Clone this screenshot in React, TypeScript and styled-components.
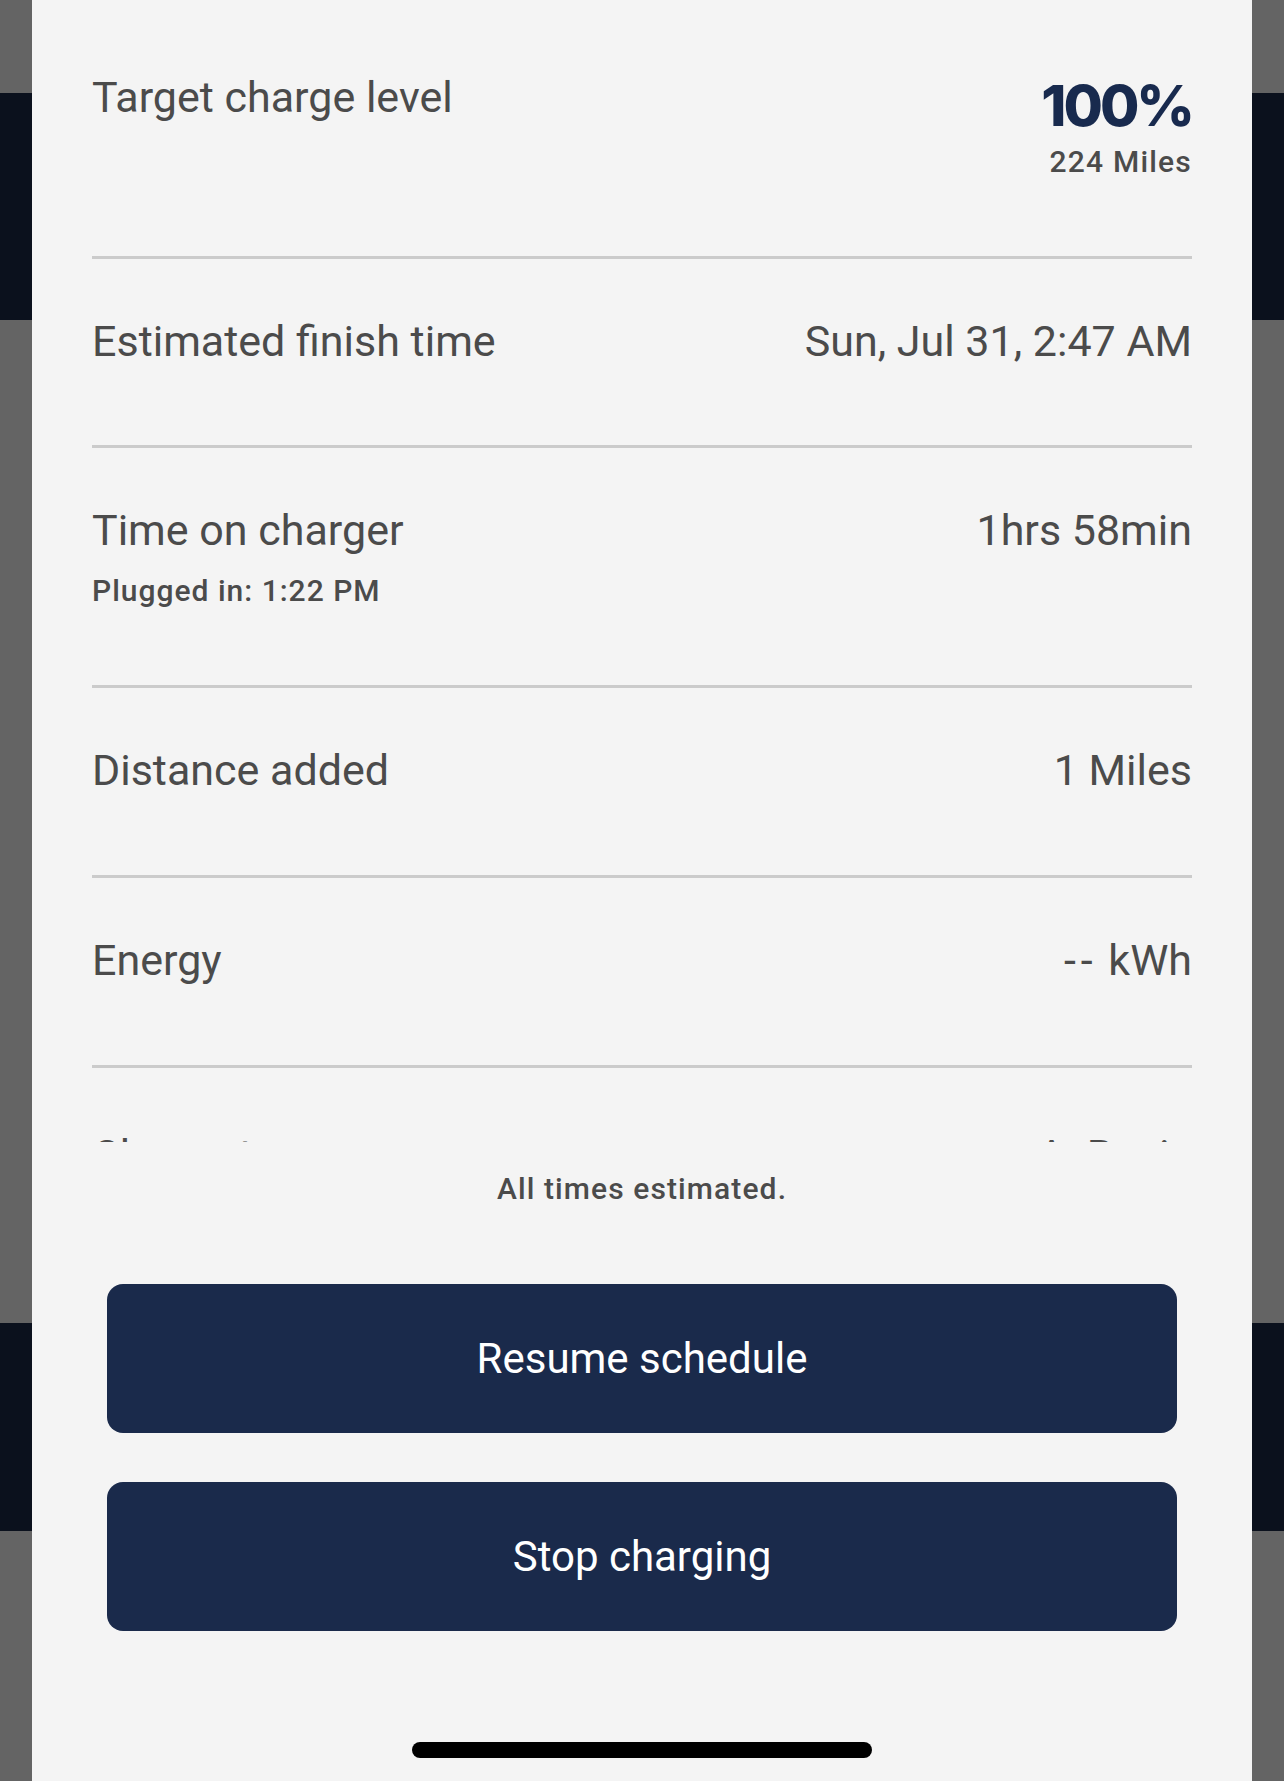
import React from "react";
import styled, { createGlobalStyle } from "styled-components";

const GlobalStyle = createGlobalStyle`
  html, body {
    margin: 0;
    padding: 0;
    background: #646464;
  }
  * { box-sizing: border-box; }
`;

const Screen = styled.div`
  position: relative;
  width: 1284px;
  height: 1781px;
  overflow: hidden;
  font-family: Roboto, "Liberation Sans", Arial, sans-serif;
`;

const Backdrop = styled.div`
  display: flex;
  flex-direction: column;
  height: 100%;
`;

const Band = styled.div<{ $h: number; $dark?: boolean }>`
  flex: 0 0 ${(p) => p.$h}px;
  background: ${(p) => (p.$dark ? "#0b111d" : "#646464")};
`;

const Sheet = styled.div`
  position: absolute;
  top: 0;
  left: 32px;
  width: 1220px;
  height: 1781px;
  background: #f4f4f4;
  display: flex;
  flex-direction: column;
`;

const ScrollArea = styled.div`
  flex: 0 0 1142px;
  overflow: hidden;
  padding: 0 60px;
`;

const Row = styled.div<{ $pt: number; $h: number }>`
  height: ${(p) => p.$h}px;
  padding-top: ${(p) => p.$pt}px;
  border-bottom: 3px solid #cbcbcb;
  display: flex;
  justify-content: space-between;
  align-items: flex-start;
`;

const LabelCol = styled.div`
  display: flex;
  flex-direction: column;
`;

const Label = styled.div`
  font-size: 43px;
  line-height: 50px;
  color: #4b4b4b;
  font-weight: 400;
`;

const SubLabel = styled.div`
  margin-top: 19px;
  font-size: 30px;
  line-height: 34px;
  font-weight: 500;
  color: #4b4b4b;
  letter-spacing: 1px;
`;

const Value = styled.div`
  font-size: 43px;
  line-height: 50px;
  color: #4b4b4b;
  text-align: right;
`;

const Dashes = styled.span`
  letter-spacing: 5px;
`;

const ValueCol = styled.div`
  margin-top: 4px;
  display: flex;
  flex-direction: column;
  align-items: flex-end;
`;

const BigValue = styled.div`
  font-family: Inter, Roboto, sans-serif;
  font-size: 57px;
  line-height: 60px;
  font-weight: 800;
  color: #182a4e;
  letter-spacing: -3px;
`;

const SmallValue = styled.div`
  margin-top: 8px;
  font-size: 30px;
  line-height: 36px;
  font-weight: 500;
  color: #4b4b4b;
  letter-spacing: 1.2px;
`;

const Footer = styled.div`
  flex: 1;
  display: flex;
  flex-direction: column;
  align-items: center;
  padding: 29px 75px 23px;
`;

const Note = styled.div`
  font-size: 30px;
  line-height: 36px;
  font-weight: 500;
  color: #4b4b4b;
  letter-spacing: 1.1px;
  margin-bottom: 77px;
`;

const ActionButton = styled.button`
  width: 100%;
  height: 149px;
  border: none;
  border-radius: 16px;
  background: #1a2a4b;
  color: #ffffff;
  font-family: Roboto, "Liberation Sans", Arial, sans-serif;
  font-size: 42px;
  font-weight: 400;
  display: flex;
  align-items: center;
  justify-content: center;
  & + & {
    margin-top: 49px;
  }
`;

const Spacer = styled.div`
  flex: 1;
`;

const HomeIndicator = styled.div`
  width: 460px;
  height: 16px;
  border-radius: 8px;
  background: #000000;
`;

export default function App() {
  return (
    <>
      <GlobalStyle />
      <Screen>
        <Backdrop>
          <Band $h={93} />
          <Band $h={227} $dark />
          <Band $h={1003} />
          <Band $h={208} $dark />
          <Band $h={250} />
        </Backdrop>
        <Sheet>
          <ScrollArea>
            <Row $pt={72} $h={259}>
              <Label>Target charge level</Label>
              <ValueCol>
                <BigValue>100%</BigValue>
                <SmallValue>224 Miles</SmallValue>
              </ValueCol>
            </Row>
            <Row $pt={57} $h={189}>
              <Label>Estimated finish time</Label>
              <Value>Sun, Jul 31, 2:47 AM</Value>
            </Row>
            <Row $pt={57} $h={240}>
              <LabelCol>
                <Label>Time on charger</Label>
                <SubLabel>Plugged in: 1:22 PM</SubLabel>
              </LabelCol>
              <Value>1hrs 58min</Value>
            </Row>
            <Row $pt={57} $h={190}>
              <Label>Distance added</Label>
              <Value>1 Miles</Value>
            </Row>
            <Row $pt={57} $h={190}>
              <Label>Energy</Label>
              <Value>
                <Dashes>--</Dashes> kWh
              </Value>
            </Row>
            <Row $pt={62} $h={189}>
              <Label>Charge type</Label>
              <Value>A: Basic</Value>
            </Row>
          </ScrollArea>
          <Footer>
            <Note>All times estimated.</Note>
            <ActionButton>Resume schedule</ActionButton>
            <ActionButton>Stop charging</ActionButton>
            <Spacer />
            <HomeIndicator />
          </Footer>
        </Sheet>
      </Screen>
    </>
  );
}
